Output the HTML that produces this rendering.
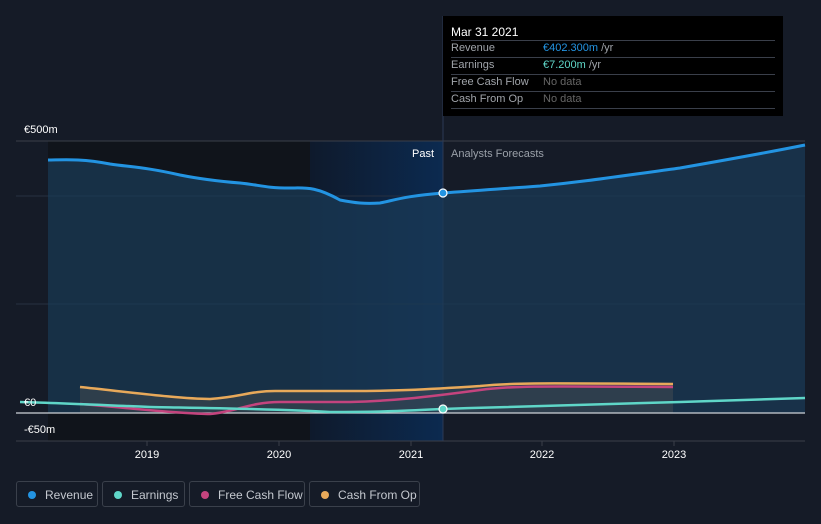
<!DOCTYPE html>
<html><head><style>
body{margin:0;background:#151b27;width:821px;height:524px;overflow:hidden;font-family:"Liberation Sans",sans-serif;position:relative}
.tt{position:absolute;left:443px;top:16px;width:340px;height:100px;background:#000}
.tt div{position:absolute;font-size:11px}
.leg{position:absolute;top:481px;height:26px;border:1px solid #3a404b;border-radius:3px;color:#c4c8cf;font-size:12px;line-height:26px;box-sizing:border-box}
.leg i{position:absolute;left:11px;top:9px;width:8px;height:8px;border-radius:50%}
</style></head><body>
<svg width="821" height="524" style="position:absolute;left:0;top:0">
<defs>
<linearGradient id="hl" x1="0" x2="1"><stop offset="0" stop-color="#0e1a2c"/><stop offset="1" stop-color="#0c2a50"/></linearGradient>
</defs>
<rect x="48" y="141" width="262" height="300" fill="#10141b"/>
<rect x="310" y="141" width="133" height="300" fill="url(#hl)"/>
<line x1="16" y1="141" x2="805" y2="141" stroke="#3a3f4a"/>
<line x1="16" y1="196" x2="805" y2="196" stroke="#273040"/>
<line x1="16" y1="304" x2="805" y2="304" stroke="#273040"/>
<line x1="16" y1="441" x2="805" y2="441" stroke="#3a3f4a"/>
<line x1="443" y1="16" x2="443" y2="441" stroke="#2c3a55"/>
<path d="M48,160 C60,160 80,158 110,164 C130,167 145,167 180,175 C200,179 215,181 240,183 C260,185 265,188 290,188 C305,188 315,186 340,200 C355,203 365,204 380,203 C395,200 405,196 443,193 C480,190 500,189 540,186 C580,182 600,179 680,168 C720,161 760,154 805,145 L805,413 L48,413 Z" fill="#1a3a55" opacity="0.75"/>
<path d="M80,387 C120,391 180,399 210,399 C240,397 250,391 275,391 L350,391 C390,391 420,390 480,386 C510,383 530,383 673,384 L673,413 L80,413 Z" fill="#5a5a55" opacity="0.35"/>
<line x1="16" y1="413" x2="805" y2="413" stroke="#cfd3d8" stroke-width="1.2"/>
<path d="M48,160 C60,160 80,158 110,164 C130,167 145,167 180,175 C200,179 215,181 240,183 C260,185 265,188 290,188 C305,188 315,186 340,200 C355,203 365,204 380,203 C395,200 405,196 443,193 C480,190 500,189 540,186 C580,182 600,179 680,168 C720,161 760,154 805,145" fill="none" stroke="#2394e2" stroke-width="3"/>
<path d="M80,387 C120,391 180,399 210,399 C240,397 250,391 275,391 L350,391 C390,391 420,390 480,386 C510,383 530,383 673,384" fill="none" stroke="#e8a95a" stroke-width="2.5"/>
<path d="M80,404 C120,407 180,414 210,414 C235,412 250,402 280,402 L350,402 C390,401 420,398 480,390 C510,386 530,386 673,387" fill="none" stroke="#c4447e" stroke-width="2.5"/>
<path d="M20,402 C60,403 100,405 150,407 C200,408 280,409 330,412 C380,412 400,411 443,409 C500,407 540,406 680,402 C740,400 780,399 805,398" fill="none" stroke="#5fd6c8" stroke-width="2.5"/>
<circle cx="443" cy="193" r="4" fill="#2394e2" stroke="#fff" stroke-width="1.2"/>
<circle cx="443" cy="409" r="4" fill="#5fd6c8" stroke="#fff" stroke-width="1.2"/>
<g fill="#fff" font-size="11" font-family="Liberation Sans">
<text x="24" y="133">€500m</text><text x="24" y="406">€0</text><text x="24" y="433">-€50m</text>
<text x="412" y="157">Past</text><text x="451" y="157" fill="#9aa0a8">Analysts Forecasts</text>
<g text-anchor="middle"><text x="147" y="458">2019</text><text x="279" y="458">2020</text><text x="411" y="458">2021</text><text x="542" y="458">2022</text><text x="674" y="458">2023</text></g>
</g>
<g stroke="#3a3f4a"><line x1="147" y1="441" x2="147" y2="446"/><line x1="279" y1="441" x2="279" y2="446"/><line x1="411" y1="441" x2="411" y2="446"/><line x1="542" y1="441" x2="542" y2="446"/><line x1="674" y1="441" x2="674" y2="446"/></g>
</svg>
<div class="tt">
<div style="left:8px;top:9px;color:#fff;font-size:12px">Mar 31 2021</div>
<div style="left:8px;right:8px;top:24px;border-top:1px solid #3a3f4a"></div>
<div style="left:8px;top:26px;color:#a0a4aa">Revenue</div><div style="left:100px;top:26px;color:#2394e2">€402.300m <span style="color:#a0a4aa">/yr</span></div>
<div style="left:8px;right:8px;top:41px;border-top:1px solid #3a3f4a"></div>
<div style="left:8px;top:43px;color:#a0a4aa">Earnings</div><div style="left:100px;top:43px;color:#5fd6c8">€7.200m <span style="color:#a0a4aa">/yr</span></div>
<div style="left:8px;right:8px;top:58px;border-top:1px solid #3a3f4a"></div>
<div style="left:8px;top:60px;color:#a0a4aa">Free Cash Flow</div><div style="left:100px;top:60px;color:#666">No data</div>
<div style="left:8px;right:8px;top:75px;border-top:1px solid #3a3f4a"></div>
<div style="left:8px;top:77px;color:#a0a4aa">Cash From Op</div><div style="left:100px;top:77px;color:#666">No data</div>
<div style="left:8px;right:8px;top:92px;border-top:1px solid #3a3f4a"></div>
</div>
<div class="leg" style="left:16px;width:82px;padding-left:28px"><i style="background:#2394e2"></i>Revenue</div>
<div class="leg" style="left:102px;width:83px;padding-left:28px"><i style="background:#5fd6c8"></i>Earnings</div>
<div class="leg" style="left:189px;width:116px;padding-left:28px"><i style="background:#c4447e"></i>Free Cash Flow</div>
<div class="leg" style="left:309px;width:111px;padding-left:28px"><i style="background:#e8a95a"></i>Cash From Op</div>
</body></html>
